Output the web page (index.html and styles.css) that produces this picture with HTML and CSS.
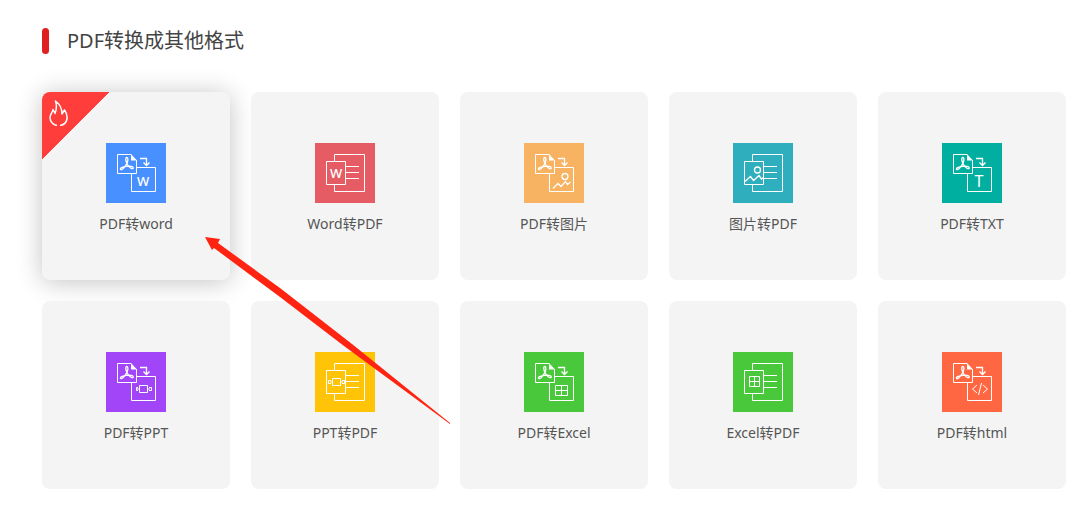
FILE: index.html
```html
<!DOCTYPE html>
<html lang="zh-CN">

<head>
    <meta charset="UTF-8">
    <meta name="viewport" content="width=device-width, initial-scale=1.0">
    <title>PDF转换成其他格式</title>
    <link rel="stylesheet" href="styles.css">
</head>

<body>
    <!-- 公用图形 -->
    <svg class="defs" width="0" height="0" aria-hidden="true">
        <symbol id="from-pdf" viewBox="0 0 60 60">
            <path d="M25 11.5H11.5V30.5H30.5V17"/>
            <path class="solid" d="M25 11L31 17.5H25Z"/>
            <path class="bold" d="M21 20.5C19.5 17.5 19.3 14.5 20.8 14.5C22.3 14.5 22.2 17.5 21 20.5L18.5 24C16.8 26.6 14.8 27.2 14.4 26.2C14 25 16.5 24 19 23.6L22.5 23.2C25.5 23 27.6 24 27.2 25.2C26.6 26.4 24 25 22.5 23.2Z"/>
            <path class="bold" d="M34 15.5H40.5V22M37.5 19.5L40.5 22.5L43.5 19.5"/>
            <path d="M30.5 24.5H49.5V48.5H25.5V30.5"/>
        </symbol>
        <symbol id="to-pdf" viewBox="0 0 60 60">
            <path d="M19.5 18.5V11.5H49.5V48.5H19.5V41.5"/>
            <path d="M11.5 18.5H30.5V41.5H11.5Z"/>
            <path d="M31 23.5H44M31 29.5H44M31 35.5H44"/>
        </symbol>
    </svg>

    <main class="convert">
        <h2 class="title">PDF转换成其他格式</h2>

        <div class="list">
            <a class="card active" href="#">
                <span class="hot">
                    <svg viewBox="0 0 20 26" aria-hidden="true">
                        <path d="M8 25.5C4 24.8 1 21.5 1 17.5C1 14.5 3.5 12.5 4 9.5L6 13.5C7.5 9.5 8.3 6 6.5 1C11.5 4.5 13 9 13 14L15.5 10C18 13.5 18.5 16 18 19C17.3 22.5 15 25 11 25.5"/>
                    </svg>
                </span>
                <svg class="icon blue" viewBox="0 0 60 60" aria-hidden="true">
                    <use href="#from-pdf"/>
                    <text x="37" y="43">W</text>
                </svg>
                <span class="name">PDF转word</span>
            </a>
            <a class="card" href="#">
                <svg class="icon red" viewBox="0 0 60 60" aria-hidden="true">
                    <use href="#to-pdf"/>
                    <text x="21" y="35">W</text>
                </svg>
                <span class="name">Word转PDF</span>
            </a>
            <a class="card" href="#">
                <svg class="icon orange" viewBox="0 0 60 60" aria-hidden="true">
                    <use href="#from-pdf"/>
                    <circle class="bold" cx="41" cy="33.5" r="3"/>
                    <path class="bold" d="M29 45.5L34 40.5L37 43.5L41.5 38.5L43.5 41.5L46.5 39"/>
                </svg>
                <span class="name">PDF转图片</span>
            </a>
            <a class="card" href="#">
                <svg class="icon cyan" viewBox="0 0 60 60" aria-hidden="true">
                    <use href="#to-pdf"/>
                    <circle class="bold" cx="24.5" cy="27" r="3"/>
                    <path class="bold" d="M12 38.5L17.5 33.5L20.5 37.5L26 32.5L28.5 36L30.5 34.5"/>
                </svg>
                <span class="name">图片转PDF</span>
            </a>
            <a class="card" href="#">
                <svg class="icon teal" viewBox="0 0 60 60" aria-hidden="true">
                    <use href="#from-pdf"/>
                    <text class="letter-t" x="37" y="44">T</text>
                </svg>
                <span class="name">PDF转TXT</span>
            </a>
            <a class="card" href="#">
                <svg class="icon purple" viewBox="0 0 60 60" aria-hidden="true">
                    <use href="#from-pdf"/>
                    <path d="M33.5 33.5H41.5V40.5H33.5ZM33.5 37H31M41.5 37H44M32 35.5H30.5V38.5H32M43 35.5H45.5V38.5H43"/>
                </svg>
                <span class="name">PDF转PPT</span>
            </a>
            <a class="card" href="#">
                <svg class="icon yellow" viewBox="0 0 60 60" aria-hidden="true">
                    <use href="#to-pdf"/>
                    <path d="M17.5 26.5H25.5V33.5H17.5ZM17.5 30H15M25.5 30H28M16 28.5H13.5V31.5H16M27 28.5H29.5V31.5H27"/>
                </svg>
                <span class="name">PPT转PDF</span>
            </a>
            <a class="card" href="#">
                <svg class="icon green" viewBox="0 0 60 60" aria-hidden="true">
                    <use href="#from-pdf"/>
                    <path d="M31.5 33.5H43.5V43.5H31.5ZM37.5 33.5V43.5M31.5 38.5H43.5"/>
                </svg>
                <span class="name">PDF转Excel</span>
            </a>
            <a class="card" href="#">
                <svg class="icon green" viewBox="0 0 60 60" aria-hidden="true">
                    <use href="#to-pdf"/>
                    <path d="M16.5 24.5H26.5V34.5H16.5ZM21.5 24.5V34.5M16.5 29.5H26.5"/>
                </svg>
                <span class="name">Excel转PDF</span>
            </a>
            <a class="card" href="#">
                <svg class="icon coral" viewBox="0 0 60 60" aria-hidden="true">
                    <use href="#from-pdf"/>
                    <path d="M35 33L30.5 37L35 41M41 33L45.5 37L41 41M39.5 31L36.5 43"/>
                </svg>
                <span class="name">PDF转html</span>
            </a>
        </div>

        <!-- 指向第一项的箭头 -->
        <svg class="pointer" viewBox="0 0 246 188" aria-hidden="true">
            <path d="M0 0L15 2L13 6L75 51L147 107L245 186L245 187L139 109L75 60L9 11L7 13Z"/>
        </svg>
    </main>
</body>

</html>
```

FILE: styles.css
```css
* {
    box-sizing: border-box;
}

body {
    margin: 0;
    background: #fff;
    font-family: "Noto Sans", "Noto Sans CJK SC", sans-serif;
}

.convert {
    position: relative;
    padding: 26px 14px 21px 42px;
}

.title {
    display: flex;
    align-items: center;
    gap: 18px;
    margin: 0 0 36px;
    font-size: 20px;
    font-weight: 400;
    line-height: 30px;
    color: #444;
}

.title::before {
    content: "";
    width: 7px;
    height: 26px;
    border-radius: 4px;
    background: #e02020;
}

.list {
    display: grid;
    grid-template-columns: repeat(5, 1fr);
    gap: 21px;
}

.card {
    position: relative;
    display: flex;
    flex-direction: column;
    align-items: center;
    padding: 51px 0 46px;
    border-radius: 8px;
    background: #f4f4f4;
    color: #555;
    text-decoration: none;
}

.card.active {
    box-shadow: 0 2px 26px rgba(0, 0, 0, 0.24);
}

.name {
    margin-top: 10px;
    font-size: 14px;
    line-height: 21px;
}

/* 热门角标 */
.hot {
    position: absolute;
    top: 0;
    left: 0;
    width: 68px;
    height: 68px;
    padding: 8px 7px;
    border-top-left-radius: 8px;
    background: linear-gradient(135deg, #ff3d3b 50%, transparent 50%);
}

.hot svg {
    display: block;
    width: 20px;
    height: 26px;
    fill: none;
    stroke: #fff;
    stroke-width: 1.5;
    stroke-linejoin: round;
}

/* 图标 */
.defs {
    position: absolute;
}

.icon {
    display: block;
    width: 60px;
    height: 60px;
    fill: none;
    stroke: #fff;
    stroke-width: 1;
}

.icon text {
    fill: #fff;
    stroke: none;
    font-size: 13px;
    font-weight: 500;
    text-anchor: middle;
}

.icon .letter-t {
    font-size: 16px;
    font-weight: 400;
}

.bold {
    stroke-width: 1.3;
}

.solid {
    fill: #fff;
    stroke: none;
}

.blue {
    background: #488fff;
}

.red {
    background: #e65c64;
}

.orange {
    background: #f7b262;
}

.cyan {
    background: #2fafbd;
}

.teal {
    background: #00afa0;
}

.purple {
    background: #a245f8;
}

.yellow {
    background: #ffc408;
}

.green {
    background: #49c83c;
}

.coral {
    background: #ff6743;
}

.pointer {
    position: absolute;
    top: 237px;
    left: 205px;
    width: 246px;
    height: 188px;
    fill: #ff2412;
    pointer-events: none;
}
```
